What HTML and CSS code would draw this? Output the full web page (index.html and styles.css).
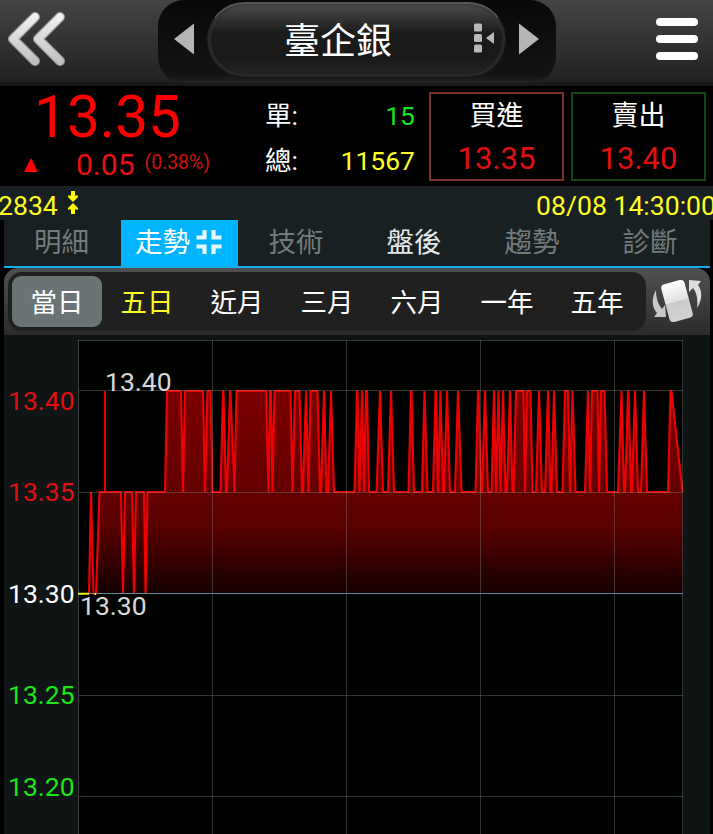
FILE: index.html
```
<!DOCTYPE html>
<html lang="zh-Hant">
<head>
  <meta charset="UTF-8" />
  <meta name="viewport" content="width=device-width, initial-scale=1.0"/>
  <title>臺企銀 2834</title>
  <link rel="stylesheet" href="styles.css">
</head>
<body>

  <!-- Header -->
  <header class="topbar">
    <svg class="back-icon" viewBox="0 0 70 87">
      <defs>
        <linearGradient id="silver" x1="0" y1="12" x2="0" y2="66" gradientUnits="userSpaceOnUse">
          <stop offset="0" stop-color="#f4f4f4"/>
          <stop offset="1" stop-color="#bdbdbd"/>
        </linearGradient>
      </defs>
      <g fill="none" stroke-linecap="round" stroke-linejoin="round">
        <path d="M35 17 L13 39 L35 61 M60 17 L38 39 L60 61" stroke="#999" stroke-width="10"/>
        <path d="M35 17 L13 39 L35 61 M60 17 L38 39 L60 61" stroke="url(#silver)" stroke-width="7.5"/>
      </g>
    </svg>
    <div class="switcher">
      <svg class="arrow" viewBox="0 0 22 32"><path d="M1 16 L21 0.5 V31.5 Z" fill="#b5b5b5"/></svg>
      <div class="stock-name">
        <span>臺企銀</span>
        <svg class="list-icon" viewBox="0 0 22 30" fill="#b8b8b8">
          <rect x="1" y="0.5" width="8" height="8" rx="1.5"/>
          <rect x="1" y="11" width="8" height="8" rx="1.5"/>
          <rect x="1" y="21.5" width="8" height="8" rx="1.5"/>
          <path d="M13 15 L21 9 V21 Z"/>
        </svg>
      </div>
      <svg class="arrow" viewBox="0 0 22 32"><path d="M21 16 L1 0.5 V31.5 Z" fill="#b5b5b5"/></svg>
    </div>
    <div class="menu-btn"><i></i><i></i><i></i></div>
  </header>

  <!-- Quote -->
  <section class="quote">
    <div class="price-box">
      <div class="price">13.35</div>
      <div class="change">
        <svg class="up" viewBox="0 0 14 14"><path d="M7 0 L14 14 H0 Z" fill="#f00"/></svg>
        <span class="diff">0.05</span>
        <span class="percent">(0.38%)</span>
      </div>
    </div>
    <div class="volume">
      <div class="row"><span>單:</span><b class="green">15</b></div>
      <div class="row"><span>總:</span><b class="yellow">11567</b></div>
    </div>
    <div class="order buy"><span>買進</span><b>13.35</b></div>
    <div class="order sell"><span>賣出</span><b>13.40</b></div>
  </section>

  <div class="status">
    <span class="code">2834</span>
    <svg class="code-icon" viewBox="0 0 10 23" fill="#ff0">
      <path d="M3 0 H7 V4.5 H10 V6 L5 11 L0 6 V4.5 H3 Z M5 12 L10 17 V18.5 H7 V23 H3 V18.5 H0 V17 Z"/>
    </svg>
    <span class="time">08/08 14:30:00</span>
  </div>

  <div class="panel">
    <!-- Tabs -->
    <nav class="tabs">
      <a>明細</a>
      <a class="active">走勢<svg class="shrink" viewBox="0 0 26 26" fill="none" stroke="#e8f8ff" stroke-width="4.2"><path d="M8.5 1 V8.5 H0.5 M17.5 1 V8.5 H25.5 M8.5 25 V17.5 H0.5 M17.5 25 V17.5 H25.5"/></svg></a>
      <a>技術</a>
      <a class="enabled">盤後</a>
      <a>趨勢</a>
      <a>診斷</a>
    </nav>

    <!-- Period -->
    <div class="period-bar">
      <div class="periods">
        <a class="selected">當日</a>
        <a class="yellow">五日</a>
        <a>近月</a>
        <a>三月</a>
        <a>六月</a>
        <a>一年</a>
        <a>五年</a>
      </div>
      <svg class="rotate" viewBox="0 0 50 48">
        <defs>
          <linearGradient id="phone" x1="0" y1="0" x2="0" y2="1">
            <stop offset="0" stop-color="#fff"/>
            <stop offset="0.5" stop-color="#e0e0e0"/>
            <stop offset="0.52" stop-color="#cacaca"/>
            <stop offset="1" stop-color="#d2d2d2"/>
          </linearGradient>
        </defs>
        <path d="M4 12 C-1 21 0 30 5 35 L2 39 L14 39 L13 27 L10 31 C6 26 4 20 4 12 Z" fill="#c8c8c8"/>
        <path d="M45 30 C51 21 50 12 46 7 L49 3 L37 2 L37 14 L41 10 C45 15 46 22 45 30 Z" fill="#ddd"/>
        <rect x="13" y="3.5" width="24" height="39" rx="4" transform="rotate(-15 25 23)" fill="url(#phone)"/>
      </svg>
    </div>

    <!-- Chart -->
    <svg class="chart" viewBox="4 335 706 499">
      <defs>
        <linearGradient id="area" x1="0" y1="391" x2="0" y2="594" gradientUnits="userSpaceOnUse">
          <stop offset="0" stop-color="#7c0000"/>
          <stop offset="0.65" stop-color="#5c0000"/>
          <stop offset="1" stop-color="#140000"/>
        </linearGradient>
      </defs>
      <rect x="79" y="340" width="604" height="500" fill="#000200"/>
      <path id="fill" fill="url(#area)"/>
      <path id="line" fill="none" stroke="#ee0000" stroke-width="2.1" stroke-linejoin="bevel"/>
      <path d="M105 391 V492" stroke="#e00" stroke-width="2"/>
      <path class="grid" d="M78 340.5 H683 M79 390.5 H683 M79 492.5 H683 M79 695.5 H683 M79 796.5 H683 M78.5 340 V834 M212.5 340 V834 M346.5 340 V834 M480.5 340 V834 M614.5 340 V834 M682.5 340 V834"/>
      <path d="M79 593.5 H683" stroke="#6286a4"/>
      <path d="M78 593.7 H89 M94.5 594 H96" stroke="#ee2" stroke-width="2"/>
      <g class="axis">
        <text x="8" y="410" fill="#e01010">13.40</text>
        <text x="8" y="501" fill="#e01010">13.35</text>
        <text x="8" y="603" fill="#fff">13.30</text>
        <text x="8" y="704" fill="#1ae61a">13.25</text>
        <text x="8" y="796" fill="#1ae61a">13.20</text>
        <text x="105" y="391" fill="#d8d8d8">13.40</text>
        <text x="80" y="615" fill="#d8d8d8">13.30</text>
      </g>
    </svg>
  </div>

  <script src="chart.js"></script>
</body>
</html>
```
FILE: styles.css
```
* { box-sizing: border-box; }

body {
  margin: 0;
  width: 713px;
  height: 834px;
  overflow: hidden;
  background: #000;
  color: #fff;
  font-family: Roboto, "Noto Sans CJK TC", sans-serif;
}

b { font-weight: normal; }
.green { color: #1ae61a; }
.yellow { color: #ffff22; }

/* header */
.topbar {
  display: flex;
  height: 87px;
  background: linear-gradient(#444 0, #222 80px, #191919 83px, #191919 86px, #000 86px);
}

.back-icon {
  width: 70px;
  height: 87px;
}

.switcher {
  display: flex;
  align-items: center;
  justify-content: space-between;
  width: 398px;
  height: 83px;
  margin-left: 88px;
  padding: 0 16px 5px 15px;
  border-radius: 26px;
  background: linear-gradient(#080808, #141414 75px, #222);
}

.arrow {
  width: 22px;
  height: 32px;
}

.stock-name {
  display: flex;
  align-items: center;
  width: 299px;
  height: 75px;
  padding: 0 0 4px 76px;
  border-radius: 38px;
  border: 1px solid #222;
  border-top: 2px solid #555;
  background: linear-gradient(#4c4c4c, #1b1b1b 40%, #191919 75%, #242424);
  box-shadow: inset 2px 0 3px #333, inset -2px 0 3px #333;
  font-size: 36px;
}

.list-icon {
  width: 22px;
  height: 30px;
  margin-left: 81px;
}

.menu-btn {
  display: flex;
  flex-direction: column;
  gap: 9px;
  width: 42px;
  margin: 18px 15px 0 auto;
}

.menu-btn i {
  height: 8px;
  border-radius: 4px;
  background: #fff;
}

/* quote */
.quote {
  display: flex;
  height: 99px;
}

.price-box {
  width: 265px;
  color: #f00;
}

.price {
  height: 61px;
  padding-left: 34px;
  font-size: 58.5px;
  line-height: 61px;
}

.change {
  display: flex;
  align-items: center;
  height: 34px;
  padding-left: 24px;
}

.up {
  width: 14px;
  height: 14px;
}

.diff {
  margin-left: 38px;
  font-size: 30px;
  line-height: 30px;
  color: #e81010;
}

.percent {
  margin: -5px 0 0 10px;
  font-size: 19.4px;
  color: #d01010;
}

.volume {
  width: 150px;
  padding-top: 6px;
  font-size: 26.5px;
}

.row {
  display: flex;
  justify-content: space-between;
  height: 45px;
  line-height: 45px;
}

.order {
  display: flex;
  flex-direction: column;
  align-items: center;
  width: 135px;
  height: 89px;
  margin: 5px 0 0 14px;
  border: 2px solid #7c302c;
  font-size: 27px;
  line-height: 44px;
}

.order b {
  font-size: 31px;
  line-height: 42px;
  color: #e01010;
}

.sell {
  margin-left: 7px;
  border-color: #144614;
}

/* code and time */
.status {
  display: flex;
  align-items: center;
  height: 34px;
  padding-top: 5px;
  background: #192022;
  color: #ffff22;
  font-size: 26.6px;
  white-space: nowrap;
}

.code { margin-left: -2px; }

.code-icon {
  width: 10px;
  height: 23px;
  margin: -6px 0 0 10px;
}

.time {
  margin-left: auto;
  margin-right: -3px;
}

.panel {
  width: 706px;
  margin-left: 4px;
}

/* tabs */
.tabs {
  display: grid;
  grid-template-columns: 117px 117px repeat(4, 1fr);
  height: 48px;
  border-bottom: 2px solid #18aeea;
  background: #192022;
}

.tabs a {
  display: flex;
  align-items: center;
  justify-content: center;
  padding: 0 2px 6px 0;
  font-size: 27.5px;
  color: #747b7b;
}

.tabs .active {
  background: #00b4ff;
  color: #fff;
}

.tabs .enabled { color: #e4e8e8; }

.shrink {
  width: 26px;
  height: 26px;
  margin: 4px 0 0 6px;
}

/* period */
.period-bar {
  display: flex;
  height: 67px;
  padding: 4px;
  border-radius: 14px 14px 0 0;
  background: linear-gradient(#505050, #2b2b2b);
}

.periods {
  display: flex;
  width: 638px;
  height: 59px;
  padding: 4px;
  border-radius: 14px;
  background: #202020;
}

.periods a {
  width: 90px;
  height: 51px;
  border-radius: 9px;
  text-align: center;
  font-size: 26.5px;
  line-height: 53px;
}

.periods .selected {
  background: #6b7474;
}

.rotate {
  width: 50px;
  height: 48px;
  margin: 6px 0 0 6px;
}

/* chart */
.chart {
  display: block;
  width: 706px;
  height: 499px;
  background: #0f1414;
}

.grid {
  fill: none;
  stroke: #999;
  stroke-opacity: 0.32;
}

.axis text {
  font-size: 26.5px;
}
```
FILE: chart.js
```
// y positions of 13.40 / 13.35 / 13.30
const HIGH = 391, MID = 492, BASE = 594;

const points = [
  [89, BASE], [91, MID], [93.5, BASE], [96, BASE], [99.5, MID],
  [121, MID], [123, BASE], [125, MID], [132, MID], [134, BASE], [136, MID],
  [144, MID], [145.5, BASE], [147.5, MID], [165, MID]
];

// runs at the high price: [last low x, first high x, last high x, next low x]
const runs = [
  [165, 167, 181, 183], [183, 185, 203, 205], [205, 207.5, 210.5, 212.5],
  [220.5, 223, 223.5, 226], [227, 230, 230.5, 234.5], [234.5, 236.5, 266, 268.5],
  [268.5, 270, 271, 272.5], [272.5, 274.5, 290.5, 292.5], [292.5, 295, 299.5, 302],
  [303, 306, 306, 308.5], [308.5, 310.5, 317.5, 320], [321, 324, 324, 326.5],
  [328, 331, 331, 334], [354.5, 357, 357.5, 359.5], [359.5, 362, 362, 364],
  [364, 366, 367, 369], [376.5, 380, 380, 383], [388, 391, 391, 394],
  [408.5, 411, 411.5, 414], [422, 424.5, 424.5, 427.5], [433, 435.5, 436, 438],
  [438, 440.5, 440.5, 443], [444, 447, 447, 450], [455, 458, 458, 461.5],
  [475.5, 478, 478.5, 481], [482, 485, 485, 488], [491.5, 494, 494, 496],
  [496, 498.5, 498.5, 500.5], [500.5, 503, 503, 505.5], [507, 510, 510, 512.5],
  [513.5, 516, 523.5, 525], [525, 527, 530.5, 532.5], [536, 539, 539, 542],
  [545, 548, 548, 550.5], [551.5, 554, 554, 557], [562.5, 565, 568, 570],
  [570, 572.5, 572.5, 575.5], [585, 588, 588, 590], [590, 592, 597.5, 599],
  [599, 601, 604.5, 607], [618, 621.5, 621.5, 624], [625, 628, 628.5, 631],
  [632, 635, 635, 638], [641, 644, 644, 647], [668, 670.5, 671.5, 682.5]
];

runs.forEach(([a, b, c, d]) => {
  points.push([a, MID], [b, HIGH], [c, HIGH], [d, MID]);
});

const line = 'M' + points.map(p => p.join(' ')).join(' L');
document.getElementById('line').setAttribute('d', line);
document.getElementById('fill').setAttribute('d', line + ' V594 H89 Z');
```
